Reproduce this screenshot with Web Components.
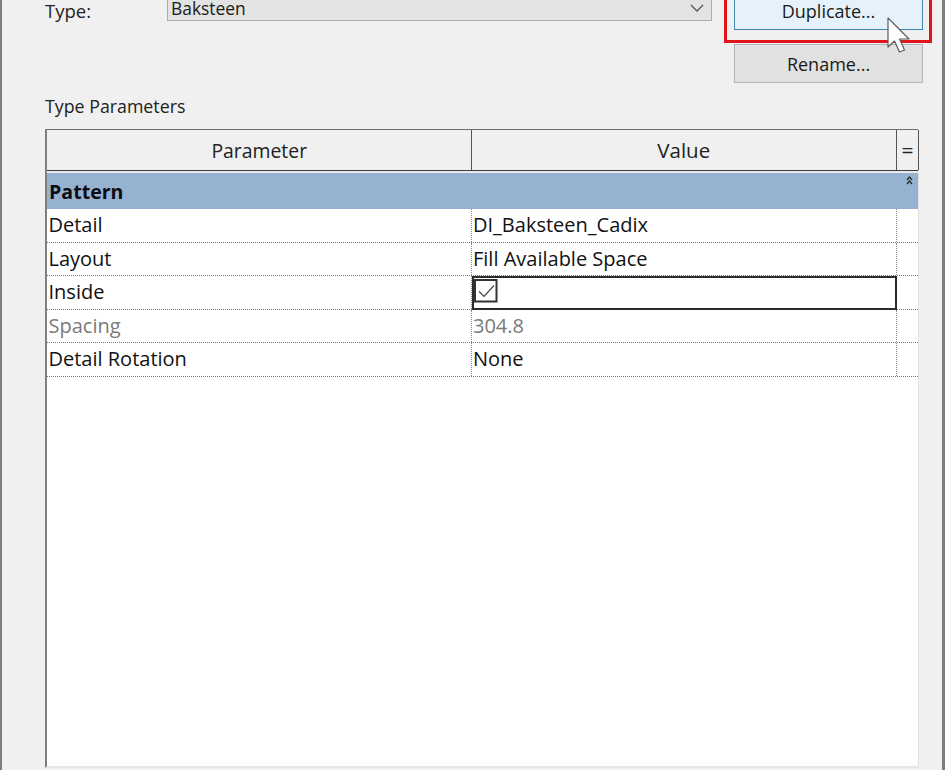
<!DOCTYPE html>
<html lang="en"><head><meta charset="utf-8"><title>Type Properties</title>
<style>
html,body{margin:0;padding:0;background:#f0f0f0;overflow:hidden}
body{width:945px;height:770px;font-family:"Open Sans","Noto Sans","Liberation Sans",sans-serif;color:#111}
</style></head><body>
<x-dialog>
  <x-type-row label="Type:" value="Baksteen"></x-type-row>
  <x-section-label>Type Parameters</x-section-label>
  <x-param-table>
    <x-param-group>Pattern</x-param-group>
    <x-param-row name="Detail" value="DI_Baksteen_Cadix"></x-param-row>
    <x-param-row name="Layout" value="Fill Available Space"></x-param-row>
    <x-param-row name="Inside" checked></x-param-row>
    <x-param-row name="Spacing" value="304.8" disabled></x-param-row>
    <x-param-row name="Detail Rotation" value="None"></x-param-row>
  </x-param-table>
</x-dialog>
<script>
function def(name, html, init){
  customElements.define(name, class extends HTMLElement{
    connectedCallback(){
      if(this.shadowRoot) return;
      const r=this.attachShadow({mode:'open'});
      r.innerHTML=html;
      if(init) init(this,r);
    }
  });
}
def('x-dialog',`<style>
:host{display:block;box-sizing:border-box;width:945px;height:770px;overflow:hidden;background:#f0f0f0;
border-left:2px solid #7d7d7d;border-right:3px solid #7d7d7d;padding-left:43px;padding-right:22px}
</style><slot></slot>`);
def('x-button',`<style>
:host{display:flex;align-items:center;justify-content:center;box-sizing:border-box;width:189px;height:39px;
background:#e1e1e1;border:1px solid #b4b4b4;font-size:18px;color:#1a1a1a}
:host([hot]){height:40px;background:#e5f1fb;border-color:#3f8bb5;padding-top:9px;align-items:flex-start;line-height:22px}
</style><slot></slot>`);
def('x-type-row',`<style>
:host{display:grid;grid-template-columns:122px 545px 22px 189px;height:93px;margin-top:-10px;position:relative;font-size:18.5px}
.lab{padding-top:10px;line-height:22px;color:#222}
.combo{box-sizing:border-box;height:31px;background:#e3e3e3;border:1px solid #acacac;display:flex;justify-content:space-between;padding:8px 7px 0 3px;line-height:18px;font-size:17.4px;color:#1a1a1a}
.combo svg{margin-top:5px}
.btns{display:flex;flex-direction:column;gap:14px}
.red{position:absolute;left:679px;top:-4px;width:208px;height:57px;box-sizing:border-box;border:3px solid #e0141c}
.cur{position:absolute;left:842px;top:27px}
</style>
<div class="lab"></div>
<div class="combo"><span class="val"></span><svg width="14" height="9" viewBox="0 0 14 9"><path d="M1 1l6 6 6-6" fill="none" stroke="#555" stroke-width="1.3"/></svg></div>
<div></div>
<div class="btns"><x-button hot>Duplicate...</x-button><x-button>Rename...</x-button></div>
<div class="red"></div>
<svg class="cur" width="26" height="38" viewBox="0 0 26 38"><path d="M1 1 L22 22 L12.5 22 L17.5 33 L12.5 35 L7.5 24 L1 30 Z" fill="#fff" stroke="#5c5c5c" stroke-width="1.2" stroke-linejoin="round"/></svg>`,
(h,r)=>{r.querySelector('.lab').textContent=h.getAttribute('label');r.querySelector('.val').textContent=h.getAttribute('value');});
def('x-section-label',`<style>
:host{display:block;height:25px;line-height:29px;font-size:17.8px;color:#222;margin-top:9px;margin-bottom:12px}
</style><slot></slot>`);
def('x-param-table',`<style>
:host{display:block;box-sizing:border-box;width:874px;height:639px;background:#fff;border-left:2px solid #7f7f7f;border-right:1px solid #e2e2e2;border-bottom:2px solid #e6e6e6;position:relative}
.head{display:grid;grid-template-columns:424.5px 425.5px 22px;height:41.5px;box-sizing:border-box;background:#f0f0f0;border-top:1.5px solid #6e6e6e;border-bottom:1.5px solid #3c3c3c;font-size:20px;color:#222}
.head div{display:flex;align-items:center;justify-content:center;border-right:1.5px solid #555;padding-top:1px}
.head .p{font-size:19.4px;padding-left:1px}
.head .val{font-size:20.5px}
.head .eq{font-size:21px;border-right:1.5px solid #555}
.gap{height:2.5px;background:#e9e9e9}
</style>
<div class="head"><div class="p">Parameter</div><div class="val">Value</div><div class="eq">=</div></div><div class="gap"></div><slot></slot>`);
def('x-param-group',`<style>
:host{display:block;height:36px;line-height:37px;background:#97b2d0;padding-left:2px;font-size:19.6px;font-weight:700;color:#0c0c12;position:relative}
svg{position:absolute;right:5px;top:3px}
</style><slot></slot><svg width="7" height="9" viewBox="0 0 7 9"><path d="M1 4l2.5-3L6 4M1 8l2.5-3L6 8" fill="none" stroke="#222" stroke-width="1.2"/></svg>`);
def('x-param-row',`<style>
:host{display:grid;grid-template-columns:424.5px 425.5px 22px;height:33.6px;box-sizing:border-box;border-bottom:1px dotted #777;font-size:20px;line-height:31px;color:#111}
:host([disabled]){color:#7a7a7a}
.c{padding-left:1.5px;border-right:1px dotted #888;white-space:nowrap;overflow:hidden}
.v.focus{box-sizing:border-box;border:2px solid #2c2c2c;padding:0;height:33.6px;margin-bottom:-1px;display:flex;align-items:flex-start}
.e{border-right:none}
.box{display:block;margin:1px 0 0 0}
</style>
<div class="c n"></div><div class="c v"></div><div class="c e"></div>`,
(h,r)=>{r.querySelector('.n').textContent=h.getAttribute('name');
const v=r.querySelector('.v');
if(h.hasAttribute('checked')){v.classList.add('focus');
v.innerHTML='<svg class="box" width="24" height="24" viewBox="0 0 24 24"><rect x="1" y="1" width="21.5" height="21.5" fill="#fff" stroke="#333" stroke-width="2"/><path d="M5 12.5l5 5 10-11" fill="none" stroke="#444" stroke-width="1.2"/></svg>';}
else v.textContent=h.getAttribute('value');});
</script>
</body></html>
